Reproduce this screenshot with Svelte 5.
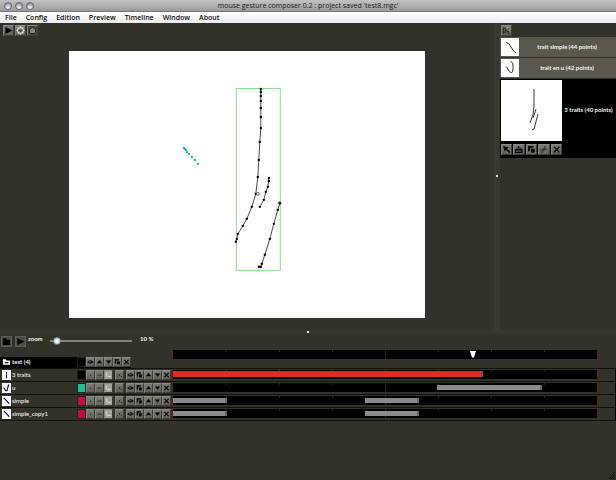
<script>
  const menus = ['File', 'Config', 'Edition', 'Preview', 'Timeline', 'Window', 'About'];

  const icons = {
    play: [{ d: 'M1.500 1 9.500 5 1.500 9z', fill: '#000' }],
    gear: [
      { d: 'M5 1.8A3.2 3.2 0 1 1 4.9 1.8zM5 .4V2M5 8v1.6M.4 5H2M8 5h1.6M1.8 1.8l1 1M7.2 7.2l1 1M8.2 1.8l-1 1M2.8 7.2l-1 1', stroke: '#e6e6d8', w: 1.2 },
      { d: 'M5 4A1 1 0 1 1 4.9 4z', fill: '#33322c' }
    ],
    ring: [{ d: 'M3.4 2.4 5 1.4l1.6 1L8.4 4v3L7 8.4H3L1.6 7V4z', fill: '#85857b', stroke: '#111', w: 1 }],
    gesture: [{ d: 'M1.5 2v6.5M1.5 2.5h3M3 8l1-4 2 1 2-3M5 6.5l3-1M6 8h2.5', stroke: '#161612', w: 1 }, { d: 'M5 2h4M6 4.5h3', stroke: '#d0d0c6', w: 0.7 }],
    folder: [{ d: 'M1 1.500h3.500l1 1.5H9V9H1z', fill: '#000' }],
    openFolder: [{ d: 'M1 2h3l1 1.200h4V8H1z', fill: '#fff' }, { d: 'M3 5h4v1.500H3z', fill: '#222' }],
    pointer: [{ d: 'M1 1 7 2.500 5.500 4.300 9 7.700 7.700 9 4.300 5.500 2.500 7z', fill: '#000' }],
    rename: [{ d: 'M.8 4.500h8.400V9H.8zM2 3h6v1H2zM4.300 1h1.400v3H4.300z', fill: '#000' }, { d: 'M2 6.800h6', stroke: '#aaa', w: 0.7 }],
    copy: [{ d: 'M1 1h6v6H1z', fill: '#000' }, { d: 'M3.500 3.500H9V9H3.500z', fill: '#000', stroke: '#9a9a94', w: 0.8 }],
    cut: [{ d: 'M1 5.500h3M6 4.500h3M3 9l4-8M3.500 4.500l3 1', stroke: '#1c1c18', w: 0.9 }],
    close: [{ d: 'M2 2l6 6M8 2 2 8', stroke: '#000', w: 1.7 }],
    eye: [{ d: 'M.8 5Q5 .8 9.200 5 5 9.200.8 5z', fill: '#222', stroke: '#000', w: 0.7 }, { d: 'M3.500 3.800h1.500v1H3.500z', fill: '#ccc' }],
    up: [{ d: 'M5 2.200 8.800 6.800H1.200z', fill: '#000' }],
    down: [{ d: 'M5 7.500 1.200 3H8.800z', fill: '#000' }],
    dot: [{ d: 'M4.300 4.500h1.500V6H4.300z', fill: '#1c1c18' }],
    dash: [{ d: 'M2 4.500h6v1.200H2z', fill: '#24241f' }],
    curve: [{ d: 'M2 1.500v4.500l2 1h4.500', stroke: '#f2f2e8', w: 1 }],
    scatter: [{ d: 'M4 4h2v2H4zM7 6.500h1.300v1.300H7zM2 6.500h1v1H2zM6.500 2h1v1h-1z', fill: '#1c1c18' }]
  };

  const thumbs = {
    line: { box: '0 0 17 17', d: 'M5 4q3 1 4.500 4.500T14 14' },
    u: { box: '0 0 17 17', d: 'M5 7l3 5q2 2 3 0 1-4 0-8l-2-2' },
    traits: { box: '0 0 61 61', d: 'M33 9v17q0 8-4 17M35 29l-3 9M37 34l-4 15-2 1' }
  };

  const gestures = [
    { name: 'trait simple (44 points)', thumb: 'line' },
    { name: 'trait en u (42 points)', thumb: 'u' },
    { name: '3 traits (40 points)', thumb: 'traits', open: true }
  ];
  const gestureTools = [['pointer', 'Select'], ['rename', 'Rename'], ['copy', 'Duplicate'], ['cut', 'Simplify'], ['close', 'Delete']];
  const drawTools = [['dot', 'Points'], ['dash', 'Segments'], ['curve', 'Curve']];
  const layerTools = [['eye', 'Show'], ['copy', 'Duplicate'], ['up', 'Move up'], ['down', 'Move down'], ['close', 'Delete']];
  const groupTools = [['eye', 'Show'], ['up', 'Move up'], ['down', 'Move down'], ['copy', 'Duplicate'], ['close', 'Delete']];

  const layers = [
    { name: '3 traits', color: '#000000', mark: 'M5 2v1.500M5 4.500V8.500', clips: [{ from: 0, to: 73.2, active: true }] },
    { name: 'u', color: '#22bd97', mark: 'M2 4.500l2 3.500h1.500L7.500 1', clips: [{ from: 62.3, to: 87.1 }] },
    { name: 'simple', color: '#c00c3e', mark: 'M2 1.500 8 8', clips: [{ from: 0, to: 12.8 }, { from: 45.2, to: 58 }] },
    { name: 'simple_copy1', color: '#c00c3e', mark: 'M2 1.500 8 8', clips: [{ from: 0, to: 12.8 }, { from: 45.2, to: 58 }] }
  ];

  const strokes = [
    [[192, 38], [192, 41], [192, 45], [192, 50], [192, 57], [192, 66], [192, 77], [191, 91], [190, 109], [189, 126], [187, 143], [183, 156], [178, 168], [174, 175], [169, 183], [168, 188], [167, 191]],
    [[200, 127], [200, 130], [199, 136], [197, 141], [195, 149], [191, 156]],
    [[211, 152], [209, 159], [205, 173], [201, 188], [196, 204], [193, 213], [192, 216], [190, 216]]
  ];
  const trail = [[115, 97], [116, 98], [117, 99], [118, 101], [120, 103], [123, 106], [126, 109], [129, 113]];
  const line = (pts) => pts.map((p) => p.join(',')).join(' ');

  let zoom = $state(10);
</script>

{#snippet icon(name)}
  <svg viewBox="0 0 10 10" aria-hidden="true">
    {#each icons[name] as p}
      <path d={p.d} fill={p.fill ?? 'none'} stroke={p.stroke ?? 'none'} stroke-width={p.w ?? 0} />
    {/each}
  </svg>
{/snippet}

{#snippet tools(list)}
  {#each list as [name, label]}
    <button class="tool {name}" aria-label={label}>{@render icon(name)}</button>
  {/each}
{/snippet}

<div class="window">
  <header class="titlebar">
    <div class="lights"><button aria-label="Close"></button><button aria-label="Minimize"></button><button aria-label="Zoom window"></button></div>
    <h1>mouse gesture composer 0.2 : project saved 'test8.mgc'</h1>
  </header>
  <nav class="menubar">
    {#each menus as m}<button>{m}</button>{/each}
  </nav>

  <main class="work">
    <section class="stage">
      <div class="bar">{@render tools([['play', 'Play'], ['gear', 'Options'], ['ring', 'Record']])}</div>
      <div class="canvas">
        <svg viewBox="0 0 356 267" role="img" aria-label="Gesture drawing">
          <rect x="167.500" y="37.500" width="44" height="182" fill="none" stroke="#7fe07f" />
          {#each strokes as s}
            <polyline points={line(s)} fill="none" stroke="#333" stroke-width="0.9" />
            {#each s as [x, y]}<circle cx={x} cy={y} r="1.2" fill="#000" />{/each}
          {/each}
          <circle cx="189" cy="143" r="1.500" fill="#fff" stroke="#444" stroke-width="0.8" />
          <path d="M211 150.500v4M209 152.500h4" stroke="#222" stroke-width="0.8" />
          <polyline points={line(trail)} fill="none" stroke="#a6e0cf" stroke-width="0.6" />
          {#each trail as [x, y]}<circle cx={x} cy={y} r="1.200" fill="#2bb597" />{/each}
        </svg>
      </div>
    </section>
    <div class="splitter vertical"><i></i></div>
    <aside>
      <div class="bar">{@render tools([['gesture', 'New gesture']])}</div>
      <ul>
        {#each gestures as g}
          <li class:open={g.open}>
            <div class="preview">
              <svg class="thumb" viewBox={thumbs[g.thumb].box} aria-hidden="true">
                <path d={thumbs[g.thumb].d} fill="none" stroke="#222" stroke-width="0.9" />
              </svg>
              {#if g.open}<div class="actions">{@render tools(gestureTools)}</div>{/if}
            </div>
            <span>{g.name}</span>
          </li>
        {/each}
      </ul>
    </aside>
  </main>

  <div class="splitter horizontal"><i></i></div>

  <section class="timeline">
    <div class="head">
      <div class="side">
        <div class="controls">
          {@render tools([['folder', 'New group'], ['play', 'Play timeline']])}
          <label for="zoom">zoom</label>
          <input id="zoom" type="range" min="0" max="250" bind:value={zoom} />
          <output for="zoom">{zoom} %</output>
        </div>
        <div class="group">
          <span class="mark">{@render icon('openFolder')}</span>
          <span class="name">test (4)</span>
          <span class="swatch"></span>
          {@render tools(groupTools)}
        </div>
      </div>
      <div class="track ruler">
        {#each Array(7) as _, i}<b style="left: {(i + 1) * 12.5}%"></b>{/each}
        <em></em>
        <svg class="playhead" viewBox="0 0 6 7" aria-label="Playhead" role="img"><path d="M0 0h6L4 6.500H2z" fill="#fff" /></svg>
      </div>
    </div>
    {#each layers as l}
      <div class="row">
        <div class="side layer">
          <span class="mark light"><svg viewBox="0 0 10 10" aria-hidden="true"><path d={l.mark} fill="none" stroke="#000" stroke-width="1.200" /></svg></span>
          <span class="name">{l.name}</span>
          <span class="swatch" style="background: {l.color}"></span>
          <div class="set">{@render tools(drawTools)}</div>
          <div class="set">{@render tools([['scatter', 'Scatter']])}</div>
          <div class="set">{@render tools(layerTools)}</div>
        </div>
        <div class="track">
          {#each Array(7) as _, i}<b style="left: {(i + 1) * 12.5}%"></b>{/each}
          <em></em>
          {#each l.clips as c}
            <div class="clip" class:active={c.active} style="left: {c.from}%; width: {c.to - c.from}%"></div>
          {/each}
        </div>
      </div>
    {/each}
    <svg class="grip" viewBox="0 0 6 7" aria-hidden="true"><path d="M0 7 6 0M2 7l4-4M4.500 7 6 5.500" stroke="#111" stroke-width="0.900" /></svg>
  </section>
</div>

<style>
  :global(body) { background: #32322b; }
  .window {
    display: flex;
    flex-direction: column;
    min-height: 100vh;
    background: #32322b;
    color: #f4f4ee;
    font: 6px/8px Lato, "Noto Sans", sans-serif;
  }
  .window, .window * { box-sizing: border-box; }
  button { padding: 0; margin: 0; border: 0; font: inherit; color: inherit; background: none; }
  svg { display: block; }

  .titlebar {
    display: grid;
    grid-template-columns: 1fr auto 1fr;
    align-items: center;
    height: 12px;
    background: linear-gradient(#c2c2c2, #9a9a9a);
    border-bottom: 1px solid #777;
  }
  .lights { display: flex; gap: 3px; padding-left: 4px; }
  .lights button {
    width: 8px;
    height: 8px;
    border-radius: 50%;
    border: 1px solid #62666e;
    background: radial-gradient(circle at 50% 85%, #eef1f5 15%, #969ba4 75%);
  }
  h1 { margin: 0; color: #161616; font: 500 7px/10px "Open Sans", sans-serif; }
  .menubar {
    display: flex;
    gap: 9px;
    height: 11px;
    padding: 0 5px;
    background: linear-gradient(#fff, #ececec);
    color: #111;
    font: 600 7px/10px "Open Sans", sans-serif;
  }

  .work { display: flex; }
  .stage { flex: 1; display: flex; flex-direction: column; padding-bottom: 12px; }
  .bar { display: flex; gap: 1px; padding: 2px 3px 0; height: 14px; }
  .bar .tool, .controls .tool { width: 11px; height: 11px; }
  .canvas { width: 72%; margin: 14px auto 0; background: #fff; }
  .canvas svg { width: 100%; }

  .tool {
    flex: none;
    width: 9px;
    height: 10px;
    border: 1px solid #3e3e38;
    border-top-color: #8c8c86;
    border-left-color: #85857f;
    background: linear-gradient(#7c7c76, #62625d);
    display: flex;
    align-items: center;
    justify-content: center;
  }
  .tool svg { width: 100%; height: 100%; }
  .tool.curve { background: #a3a39b; }
  .bar .tool.ring { background: #45453e; }
  .controls .tool { background: #4c4c45; border-color: #606059; }
  .controls .tool + .tool { margin-left: 1px; }

  .splitter { display: flex; align-items: center; justify-content: center; background: #35352e; }
  .vertical { width: 6px; background: #383831; }
  .horizontal { height: 4px; background: #38362e; }
  .splitter i { width: 2px; height: 2px; background: #e8e8e0; }

  aside { width: 116px; display: flex; flex-direction: column; }
  aside .bar { padding-left: 1px; }
  ul { list-style: none; margin: 0; padding: 0; }
  li {
    display: flex;
    align-items: center;
    min-height: 20px;
    margin-bottom: 1px;
    padding: 1px;
    background: #5a584c;
    font-weight: 700;
  }
  li .thumb { width: 18px; height: 18px; background: #fff; }
  li span { flex: 1; text-align: center; white-space: nowrap; }
  li.open { background: #000; align-items: flex-start; padding-bottom: 3px; }
  li.open .thumb { width: 61px; height: 61px; }
  li.open span { padding-top: 26px; }
  .actions { display: flex; padding-top: 3px; gap: 1px; }
  .actions .tool { flex: 1; height: 11px; }

  .timeline { flex: 1; display: flex; flex-direction: column; }
  .head { display: flex; height: 34px; padding-top: 1px; }
  .side { flex: none; width: 172px; }
  .controls { display: flex; align-items: center; height: 13px; padding-left: 1px; gap: 2px; }
  .controls label, .controls output { font-weight: 700; align-self: flex-start; }
  .controls label { width: 20px; }
  .controls output { padding-left: 6px; }
  input[type='range'] { -webkit-appearance: none; appearance: none; width: 82px; height: 8px; margin: 0; background: none; }
  input[type='range']::-webkit-slider-runnable-track { height: 2px; background: #85857f; }
  input[type='range']::-webkit-slider-thumb {
    -webkit-appearance: none;
    width: 8px;
    height: 8px;
    margin-top: -3px;
    border-radius: 50%;
    border: 1px solid #6d8698;
    background: radial-gradient(#fff, #b4c9d6);
  }
  .group {
    display: flex;
    align-items: center;
    width: 131px;
    height: 11px;
    margin-top: 9px;
    padding-left: 2px;
    background: #000;
  }
  .row { display: flex; align-items: center; height: 13px; border-top: 1px solid #12120e; border-right: 1px solid #000; }
  .row:nth-last-child(2) { height: 14px; border-bottom: 1px solid #12120e; }
  .layer { display: flex; align-items: center; padding-left: 2px; }
  .mark { flex: none; width: 9px; height: 10px; }
  .mark.light { background: #fff; }
  .mark svg { width: 100%; height: 100%; }
  .name { flex: none; width: 66px; padding-left: 1px; font-weight: 500; }
  .group .name { font-weight: 700; }
  .swatch { flex: none; width: 9px; height: 10px; background: #000; border: 1px solid #22221d; }
  .set { display: flex; margin-right: 2px; }
  .set:last-child { margin-right: 0; }

  .track {
    position: relative;
    flex: 1;
    height: 9px;
    margin-right: 18px;
    background: #000;
    border-left: 1px solid #641b16;
    border-right: 1px solid #641b16;
  }
  .row .track { margin-right: 17px; }
  .ruler { margin-top: 15px; }
  .track b { position: absolute; top: 0; width: 1px; height: 2px; background: #3b201c; }
  .track em { position: absolute; left: 50%; top: 0; bottom: 0; width: 1px; background: #4c1511; }
  .clip { position: absolute; top: 2px; bottom: 2px; background: #8b8b8b; border-right: 2px solid #666; }
  .clip.active { top: 1px; background: #e22c29; border-right-color: #8d4a45; }
  .playhead { position: absolute; left: 70%; top: 1px; width: 6px; height: 7px; }
  .grip { width: 6px; height: 7px; margin: auto 1px 1px auto; }
</style>
